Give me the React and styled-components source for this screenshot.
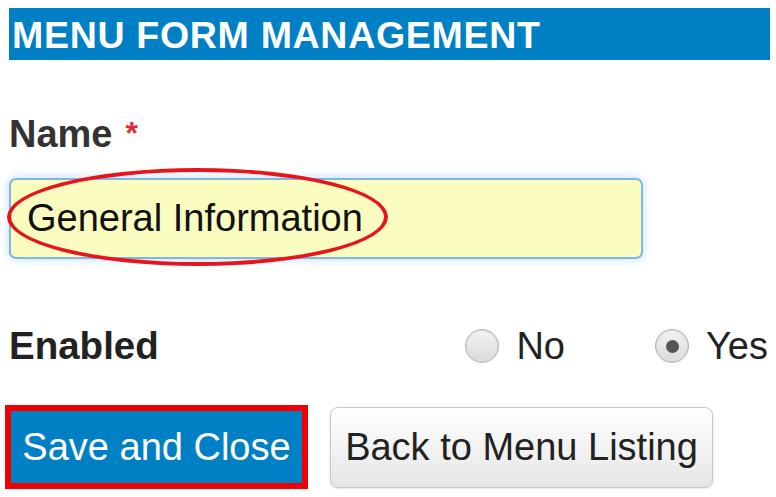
import React from 'react';
import styled, { createGlobalStyle } from 'styled-components';

const Global = createGlobalStyle`
  body {
    margin: 0;
    background: #fff;
    font-family: "Liberation Sans", Arial, sans-serif;
  }
`;

const Page = styled.div`
  padding: 8px 6px 0 9px;
  display: flex;
  flex-direction: column;
`;

const Header = styled.div`
  height: 52px;
  background: #0080c4;
  color: #fff;
  font-weight: bold;
  font-size: 37.5px;
  line-height: 54px;
  letter-spacing: 0.7px;
  padding-left: 3px;
  white-space: nowrap;
  overflow: hidden;
`;

const Label = styled.div`
  font-weight: bold;
  font-size: 38px;
  line-height: 40px;
  color: #333;
  margin-top: 54px;
  display: flex;
  align-items: flex-start;
  span {
    color: #e8283a;
    font-size: 32px;
    line-height: 30px;
    margin-left: 13px;
    margin-top: 4px;
  }
`;

const Field = styled.div`
  position: relative;
  margin-top: 24px;
  width: 634px;
  height: 81px;
`;

const Input = styled.div`
  box-sizing: border-box;
  height: 100%;
  background: #fafcc0;
  border: 2px solid #7fb6e2;
  border-radius: 7px;
  box-shadow: 0 0 10px rgba(102, 175, 233, 0.45);
  font-size: 38px;
  color: #111;
  padding-left: 16px;
  display: flex;
  align-items: center;
`;

const Ellipse = styled.div`
  position: absolute;
  left: -2px;
  top: -10px;
  width: 381px;
  height: 98px;
  border: 4px solid #e8141b;
  border-radius: 50%;
  box-sizing: border-box;
`;

const Row = styled.div`
  display: flex;
  align-items: center;
  margin-top: 67px;
  height: 40px;
  padding-right: 2px;
`;

const RowLabel = styled.div`
  font-weight: bold;
  font-size: 38.5px;
  color: #222;
  flex: 1;
`;

const Option = styled.label`
  display: flex;
  align-items: center;
  gap: 17px;
  font-size: 38px;
  color: #222;
  margin-left: ${p => p.$gap}px;
`;

const Radio = styled.span`
  box-sizing: border-box;
  width: 34px;
  height: 34px;
  border-radius: 50%;
  border: 1.5px solid #b3b3b3;
  background: linear-gradient(#f4f4f4, #dadada);
  box-shadow: inset 0 1px 2px rgba(0,0,0,0.12);
  display: flex;
  align-items: center;
  justify-content: center;
  &::after {
    content: '';
    width: 13px;
    height: 13px;
    border-radius: 50%;
    background: #555;
    display: ${p => (p.$checked ? 'block' : 'none')};
  }
`;

const Buttons = styled.div`
  display: flex;
  align-items: center;
  gap: 22px;
  margin-top: 39px;
`;

const Button = styled.div`
  box-sizing: border-box;
  height: ${p => (p.$primary ? 84 : 81)}px;
  width: ${p => (p.$primary ? 303 : 383)}px;
  display: flex;
  align-items: center;
  justify-content: center;
  font-size: 38px;
  border-radius: ${p => (p.$primary ? 0 : 8)}px;
  color: ${p => (p.$primary ? '#fff' : '#222')};
  background: ${p => (p.$primary ? '#0080c4' : 'linear-gradient(#ffffff, #e6e6e6)')};
  border: ${p => (p.$primary ? '6px solid #f00000' : '1.5px solid #c8c8c8')};
  box-shadow: ${p => (p.$primary ? 'none' : '0 1px 3px rgba(0,0,0,0.12)')};
  margin-left: ${p => (p.$primary ? -4 : 0)}px;
  white-space: nowrap;
`;

export default function App() {
  return (
    <Page>
      <Global />
      <Header>MENU FORM MANAGEMENT</Header>
      <Label>Name<span>*</span></Label>
      <Field>
        <Input>General Information</Input>
        <Ellipse />
      </Field>
      <Row>
        <RowLabel>Enabled</RowLabel>
        <Option $gap={0}><Radio />No</Option>
        <Option $gap={90}><Radio $checked />Yes</Option>
      </Row>
      <Buttons>
        <Button $primary>Save and Close</Button>
        <Button>Back to Menu Listing</Button>
      </Buttons>
    </Page>
  );
}
